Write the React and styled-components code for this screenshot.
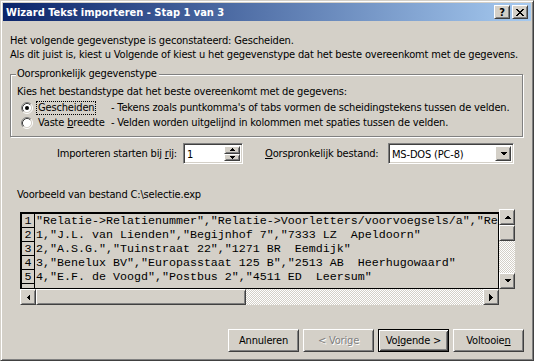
import React from "react";
import styled, { createGlobalStyle, css } from "styled-components";

const FACE = "#d4d0c8";

const GlobalStyle = createGlobalStyle`
  html, body {
    margin: 0;
    padding: 0;
    background: ${FACE};
  }
  body {
    font-family: "DejaVu Sans Condensed", "Liberation Sans", sans-serif;
    font-size: 11px;
    letter-spacing: -0.17px;
    color: #000;
  }
`;

const raised = css`
  border: 1px solid;
  border-color: #fff #404040 #404040 #fff;
  box-shadow: inset 1px 1px ${FACE}, inset -1px -1px #808080;
  background: ${FACE};
  box-sizing: border-box;
`;

const sunken = css`
  border: 1px solid;
  border-color: #808080 #fff #fff #808080;
  box-shadow: inset 1px 1px #404040, inset -1px -1px ${FACE};
  box-sizing: border-box;
`;

const Window = styled.div`
  width: 534px;
  height: 361px;
  box-sizing: border-box;
  background: ${FACE};
  border: 1px solid;
  border-color: ${FACE} #404040 #404040 ${FACE};
  box-shadow: inset 1px 1px #fff, inset -1px -1px #808080;
  padding: 2px;
  display: flex;
  flex-direction: column;
`;

const TitleBar = styled.div`
  height: 18px;
  flex: none;
  display: flex;
  align-items: center;
  padding: 0 3px 0 3px;
  background: linear-gradient(to right, #0a246a, #a6caf0);
`;

const Title = styled.div`
  flex: 1;
  color: #fff;
  font-weight: bold;
  letter-spacing: 0;
  white-space: nowrap;
`;

const TitleButton = styled.div`
  ${raised};
  width: 16px;
  height: 14px;
  display: flex;
  align-items: center;
  justify-content: center;
  margin-left: ${(p) => (p.$gap ? "2px" : "0")};
  font-weight: bold;
  font-size: 11px;
  line-height: 1;
`;

const Body = styled.div`
  flex: 1;
  display: flex;
  flex-direction: column;
  padding: 13px 7px 0 7px;
`;

const Line = styled.div`
  line-height: 14px;
  height: 14px;
  white-space: nowrap;
`;

const GroupBox = styled.div`
  position: relative;
  margin-top: 12px;
  border: 1px solid #808080;
  box-shadow: inset 1px 1px #fff, 1px 1px #fff;
  height: 63px;
  box-sizing: border-box;
  padding: 10px 0 0 6px;
  width: 513px;
`;

const Legend = styled.span`
  position: absolute;
  top: -8px;
  left: 5px;
  padding: 0 2px 0 1px;
  background: ${FACE};
  line-height: 14px;
`;

const RadioGrid = styled.div`
  display: grid;
  grid-template-columns: 12px 72px auto;
  column-gap: 3px;
  row-gap: 1px;
  padding-left: 4px;
  margin-top: 2px;
  align-items: center;
`;

const RadioLabel = styled.span`
  line-height: 12px;
  padding: 0 1px;
  border: 1px dotted ${(p) => (p.$focus ? "#000" : "transparent")};
  justify-self: start;
  white-space: nowrap;
`;

const Desc = styled.span`
  line-height: 14px;
  white-space: nowrap;
`;

const ImportRow = styled.div`
  display: flex;
  align-items: center;
  margin-top: 6px;
  height: 21px;
`;

const FieldLabel = styled.span`
  width: ${(p) => p.$w}px;
  margin-left: ${(p) => p.$ml || 0}px;
  text-align: ${(p) => p.$align || "left"};
  white-space: nowrap;
  flex: none;
`;

const Spinner = styled.div`
  ${sunken};
  background: #fff;
  width: 60px;
  height: 21px;
  margin-left: 6px;
  display: flex;
  padding: 2px;
`;

const FieldText = styled.span`
  flex: 1;
  padding-left: 1px;
  line-height: 17px;
  white-space: nowrap;
`;

const SpinCol = styled.div`
  width: 16px;
  display: flex;
  flex-direction: column;
`;

const SpinBtn = styled.div`
  ${raised};
  flex: 1;
  display: flex;
  align-items: center;
  justify-content: center;
`;

const Combo = styled.div`
  ${sunken};
  background: #fff;
  width: 126px;
  height: 21px;
  margin-left: 9px;
  display: flex;
  padding: 2px;
`;

const DropBtn = styled.div`
  ${raised};
  width: 16px;
  display: flex;
  align-items: center;
  justify-content: center;
`;

const PreviewLabel = styled(Line)`
  margin-top: 24px;
  margin-left: 7px;
`;

const PreviewGrid = styled.div`
  display: grid;
  grid-template-columns: 479px 16px;
  grid-template-rows: 80px 16px;
  margin-top: 7px;
  margin-left: 10px;
`;

const PreviewBox = styled.div`
  align-self: end;
  height: 77px;
  border: 1px solid #000;
  border-left-width: 2px;
  border-top-width: 2px;
  box-sizing: border-box;
  overflow: hidden;
  font-family: "Liberation Mono", "Courier New", monospace;
  font-size: 11.67px;
  letter-spacing: 0;
`;

const PreviewRow = styled.div`
  display: flex;
  height: 14px;
  line-height: 14px;
`;

const RowNum = styled.div`
  width: 12px;
  flex: none;
  text-align: center;
  border-right: 1px solid #000;
  border-bottom: 1px solid #000;
  box-sizing: content-box;
  height: 13px;
  line-height: 14px;
`;

const RowText = styled.div`
  padding-left: 1px;
  white-space: pre;
`;

const VScroll = styled.div`
  grid-row: 1;
  grid-column: 2;
  display: flex;
  flex-direction: column;
`;

const HScroll = styled.div`
  grid-row: 2;
  grid-column: 1;
  display: flex;
`;

const ScrollBtn = styled.div`
  ${raised};
  width: 16px;
  height: 16px;
  flex: none;
  display: flex;
  align-items: center;
  justify-content: center;
`;

const Thumb = styled.div`
  ${raised};
  flex: none;
  width: ${(p) => p.$w || 16}px;
  height: ${(p) => p.$h || 16}px;
`;

const Track = styled.div`
  flex: 1;
  background: repeating-conic-gradient(#fff 0 25%, ${FACE} 0 50%) 0 0 / 2px 2px;
`;

const ButtonRow = styled.div`
  display: flex;
  justify-content: flex-end;
  gap: 4px;
  margin-top: 24px;
`;

const Button = styled.div`
  width: 71px;
  height: 23px;
  box-sizing: border-box;
  display: flex;
  align-items: center;
  justify-content: center;
  background: ${FACE};
  border: 1px solid;
  border-color: #fff #404040 #404040 #fff;
  box-shadow: inset 1px 1px ${FACE}, inset -1px -1px #808080;
  color: ${(p) => (p.$disabled ? "#808080" : "#000")};
  text-shadow: ${(p) => (p.$disabled ? "1px 1px #fff" : "none")};
  ${(p) =>
    p.$default &&
    css`
      border: 1px solid #000;
      box-shadow: inset 1px 1px #fff, inset -1px -1px #404040,
        inset 2px 2px ${FACE}, inset -2px -2px #808080;
    `}
`;

const Arrow = ({ dir }) => {
  const pts = {
    up: "0,4 7,4 3.5,0.5",
    down: "0,0 7,0 3.5,3.5",
    left: "4,0 4,7 0.5,3.5",
    right: "0,0 0,7 3.5,3.5",
  }[dir];
  const horiz = dir === "left" || dir === "right";
  return (
    <svg width={horiz ? 4 : 7} height={horiz ? 7 : 4} viewBox={horiz ? "0 0 4 7" : "0 0 7 4"}>
      <polygon points={pts} fill="#000" shapeRendering="crispEdges" />
    </svg>
  );
};

const SmallArrow = ({ dir }) => (
  <svg width="5" height="3" viewBox="0 0 5 3">
    <polygon
      points={dir === "up" ? "0,3 5,3 2.5,0" : "0,0 5,0 2.5,3"}
      fill="#000"
      shapeRendering="crispEdges"
    />
  </svg>
);

const Radio = ({ checked }) => (
  <svg width="12" height="12" viewBox="0 0 12 12">
    <circle cx="6" cy="6" r="4.5" fill="#fff" />
    <path d="M2.11 9.89A5.5 5.5 0 0 1 9.89 2.11" stroke="#808080" fill="none" />
    <path d="M9.89 2.11A5.5 5.5 0 0 1 2.11 9.89" stroke="#fff" fill="none" />
    <path d="M2.82 9.18A4.5 4.5 0 0 1 9.18 2.82" stroke="#404040" fill="none" />
    <path d="M9.18 2.82A4.5 4.5 0 0 1 2.82 9.18" stroke={FACE} fill="none" />
    {checked && <circle cx="6" cy="6" r="2" fill="#000" />}
  </svg>
);

const rows = [
  '"Relatie->Relatienummer","Relatie->Voorletters/voorvoegsels/a","Relatie->Naam"',
  '1,"J.L. van Lienden","Begijnhof 7","7333 LZ  Apeldoorn"',
  '2,"A.S.G.","Tuinstraat 22","1271 BR  Eemdijk"',
  '3,"Benelux BV","Europasstaat 125 B","2513 AB  Heerhugowaard"',
  '4,"E.F. de Voogd","Postbus 2","4511 ED  Leersum"',
  "",
];

export default function App() {
  return (
    <>
      <GlobalStyle />
      <Window>
        <TitleBar>
          <Title>Wizard Tekst importeren - Stap 1 van 3</Title>
          <TitleButton>?</TitleButton>
          <TitleButton $gap>
            <svg width="8" height="7" viewBox="0 0 8 7">
              <path
                d="M0 0h2v1h1v1h2v-1h1v-1h2v1h-1v1h-1v1h-1v1h1v1h1v1h1v1h-2v-1h-1v-1h-2v1h-1v1h-2v-1h1v-1h1v-1h1v-1h-1v-1h-1v-1h-1z"
                fill="#000"
              />
            </svg>
          </TitleButton>
        </TitleBar>
        <Body>
          <Line>Het volgende gegevenstype is geconstateerd: Gescheiden.</Line>
          <Line>
            Als dit juist is, kiest u Volgende of kiest u het gegevenstype dat het beste
            overeenkomt met de gegevens.
          </Line>

          <GroupBox>
            <Legend>Oorspronkelijk gegevenstype</Legend>
            <Line>Kies het bestandstype dat het beste overeenkomt met de gegevens:</Line>
            <RadioGrid>
              <Radio checked />
              <RadioLabel $focus>Gescheiden</RadioLabel>
              <Desc>- Tekens zoals puntkomma's of tabs vormen de scheidingstekens tussen de velden.</Desc>
              <Radio />
              <RadioLabel>
                Vaste <u>b</u>reedte
              </RadioLabel>
              <Desc>- Velden worden uitgelijnd in kolommen met spaties tussen de velden.</Desc>
            </RadioGrid>
          </GroupBox>

          <ImportRow>
            <FieldLabel $w={167} $align="right">
              Importeren starten bij <u>r</u>ij:
            </FieldLabel>
            <Spinner>
              <FieldText>1</FieldText>
              <SpinCol>
                <SpinBtn>
                  <SmallArrow dir="up" />
                </SpinBtn>
                <SpinBtn>
                  <SmallArrow dir="down" />
                </SpinBtn>
              </SpinCol>
            </Spinner>
            <FieldLabel $w={114} $ml={22}>
              <u>O</u>orspronkelijk bestand:
            </FieldLabel>
            <Combo>
              <FieldText>MS-DOS (PC-8)</FieldText>
              <DropBtn>
                <Arrow dir="down" />
              </DropBtn>
            </Combo>
          </ImportRow>

          <PreviewLabel>Voorbeeld van bestand C:\selectie.exp</PreviewLabel>

          <PreviewGrid>
            <PreviewBox>
              {rows.map((r, i) => (
                <PreviewRow key={i}>
                  <RowNum>{r ? i + 1 : ""}</RowNum>
                  <RowText>{r}</RowText>
                </PreviewRow>
              ))}
            </PreviewBox>
            <VScroll>
              <ScrollBtn>
                <Arrow dir="up" />
              </ScrollBtn>
              <Thumb />
              <Track />
              <ScrollBtn>
                <Arrow dir="down" />
              </ScrollBtn>
            </VScroll>
            <HScroll>
              <ScrollBtn>
                <Arrow dir="left" />
              </ScrollBtn>
              <Thumb $w={210} />
              <Track />
              <ScrollBtn>
                <Arrow dir="right" />
              </ScrollBtn>
            </HScroll>
          </PreviewGrid>

          <ButtonRow>
            <Button>Annuleren</Button>
            <Button $disabled>&lt; Vorige</Button>
            <Button $default>
              Vo<u>l</u>gende &gt;
            </Button>
            <Button>
              Voltooie<u>n</u>
            </Button>
          </ButtonRow>
        </Body>
      </Window>
    </>
  );
}
